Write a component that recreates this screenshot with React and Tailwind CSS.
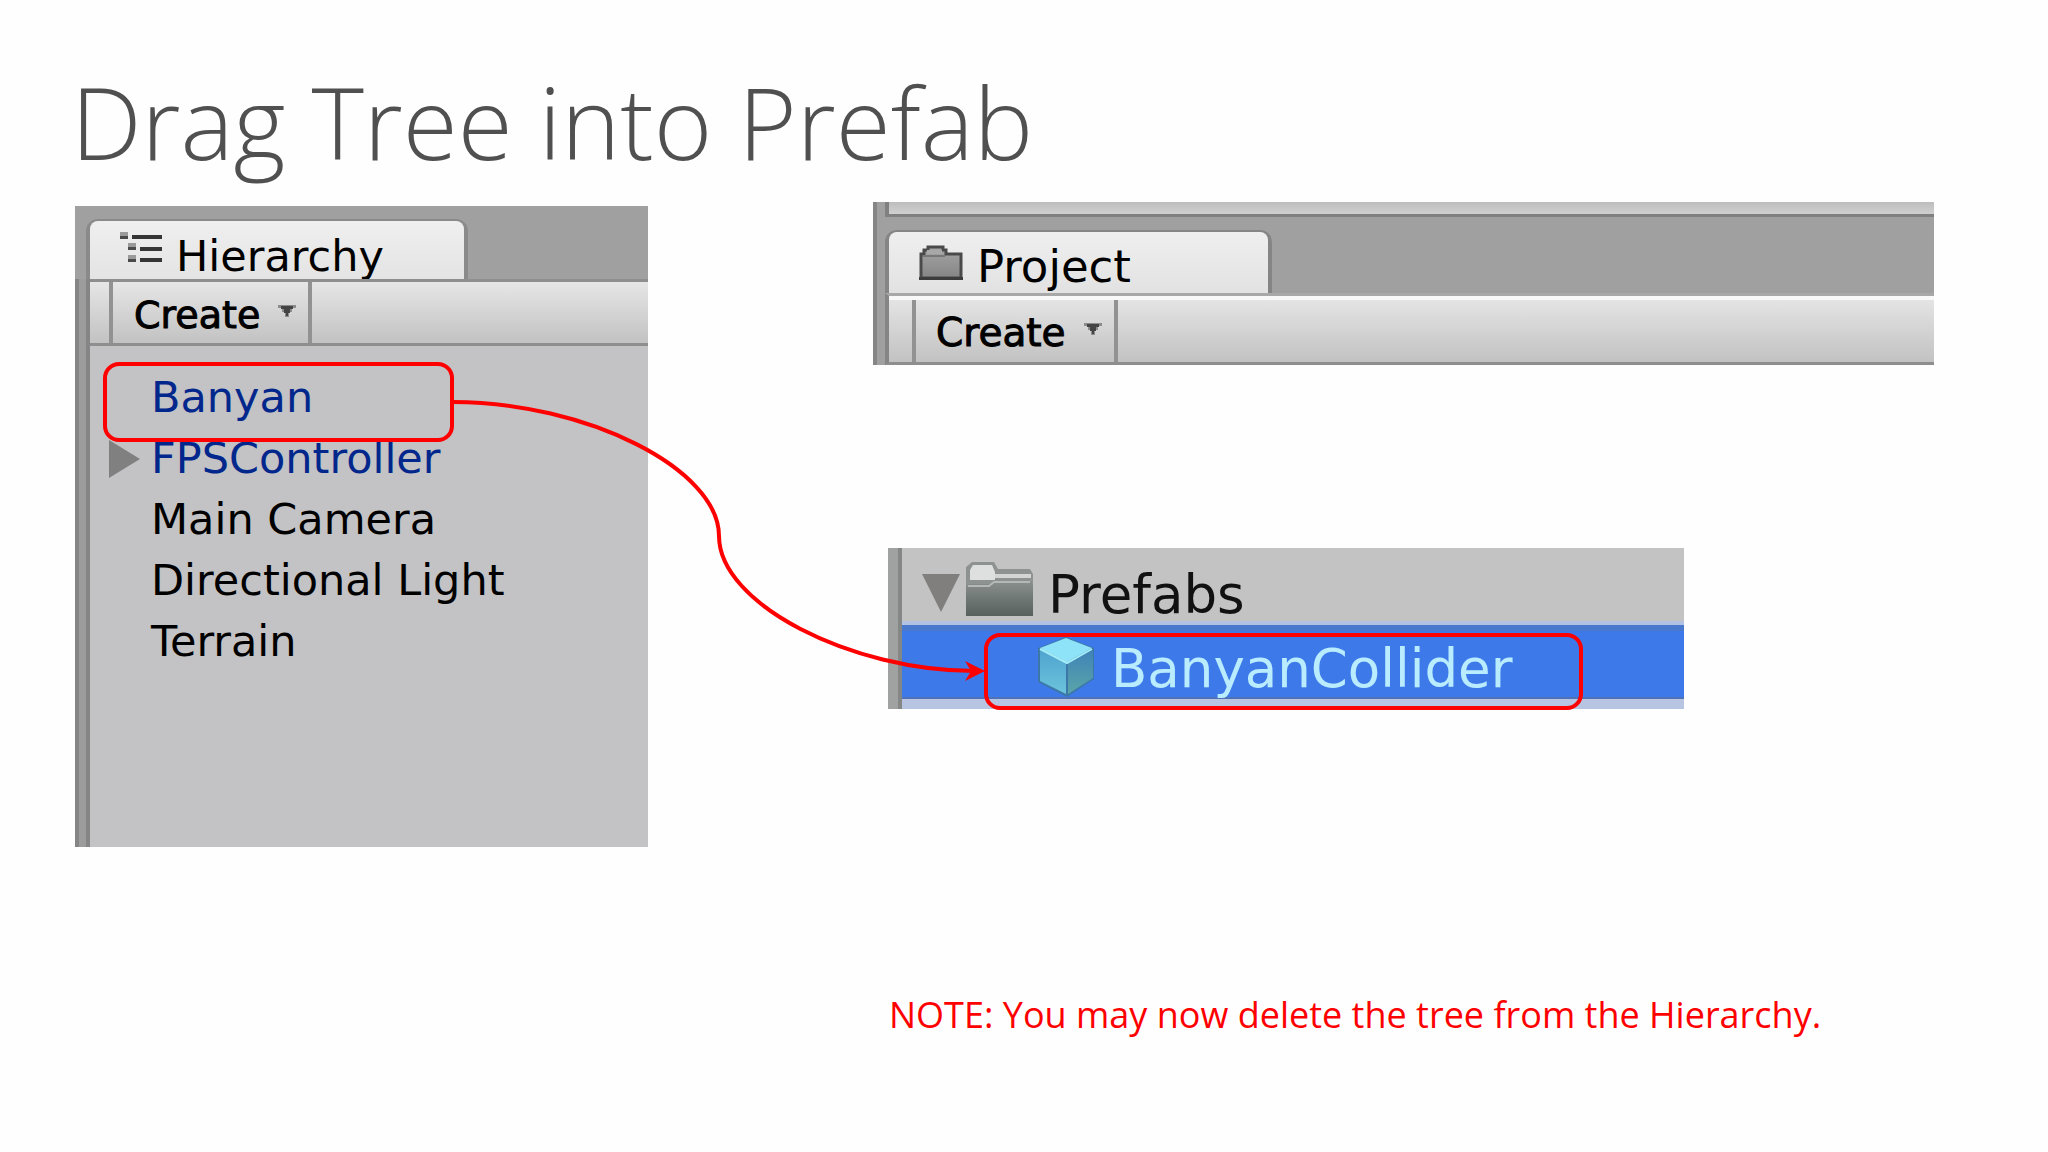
function CreateButton({ className }) {
  return (
    <button
      type="button"
      className={`flex items-center border-x-4 border-[#929292] leading-[48px] text-black [-webkit-text-stroke:1px_black] ${className}`}
    >
      Create
      <svg viewBox="0 0 18 12" className="mb-2 ml-[18px] h-3 w-[18px] shrink-0" aria-hidden="true">
        <path d="M0 0H18V3H14V7H11V12H7V7H4V3H0Z" fill="#8c8c8c" />
        <path d="M3 1H15V4H12V8H10V11H8V8H6V4H3Z" fill="#444" />
      </svg>
    </button>
  );
}

function HierarchyIcon() {
  return (
    <svg viewBox="0 0 44 36" className="h-9 w-11 shrink-0" aria-hidden="true">
      <g fill="#9a9a9a">
        <path d="M0 0H8V4H0ZM8 11H16V15H8ZM8 23H16V27H8Z" />
      </g>
      <g fill="#4a4a4a">
        <path d="M0 4H8V7H0ZM8 15H16V18H8ZM8 27H16V30H8Z" />
      </g>
      <g fill="#353535">
        <path d="M12 3H42V7H12ZM20 15H42V19H20ZM20 26H42V30H20Z" />
      </g>
    </svg>
  );
}

function ProjectIcon() {
  return (
    <svg viewBox="0 0 44 36" className="h-9 w-11 shrink-0" aria-hidden="true">
      <defs>
        <linearGradient id="projectFolder" x2="0" y2="1">
          <stop stopColor="#a5a5a5" />
          <stop offset="1" stopColor="#858585" />
        </linearGradient>
      </defs>
      <path d="M2 33V9H5V5H9V2H24V5H27V9H42V33Z" fill="url(#projectFolder)" stroke="#4a4a4a" strokeWidth="3" />
      <path d="M8 5H23V9H8Z" fill="#a8a8a8" />
      <path d="M4 11H26" stroke="#777" strokeWidth="2" />
      <path d="M0 33.500H44" stroke="#3c3c3c" strokeWidth="3" />
    </svg>
  );
}

function FolderIcon() {
  return (
    <svg viewBox="0 0 70 58" className="h-[58px] w-[70px] shrink-0" aria-hidden="true">
      <defs>
        <linearGradient id="folderFront" x2="0" y2="1">
          <stop stopColor="#8b918f" />
          <stop offset="1" stopColor="#56605d" />
        </linearGradient>
      </defs>
      <path d="M2 7L8 2H30L34 9H66L69 14V30H2Z" fill="#8e9391" />
      <path d="M9 5H28L31 12V20H6V10Z" fill="#dedfdf" />
      <path d="M31 14H67V18H31Z" fill="#d3d5d5" />
      <path d="M31 20H67V23H31Z" fill="#a9adac" />
      <path d="M4 24H25L30 20H66L69 24V56H2V27Z" fill="url(#folderFront)" />
      <path d="M4 26H25L30 22H66" fill="none" stroke="#b4b8b7" strokeWidth="2" />
    </svg>
  );
}

function CubeIcon() {
  return (
    <svg viewBox="0 0 62 62" className="h-[62px] w-[62px] shrink-0" aria-hidden="true">
      <defs>
        <linearGradient id="cubeLeft" x2="0" y2="1">
          <stop stopColor="#4fa3cf" />
          <stop offset="1" stopColor="#6cc4dc" />
        </linearGradient>
        <linearGradient id="cubeRight" x2="0" y2="1">
          <stop stopColor="#3f83b8" />
          <stop offset="1" stopColor="#5aa5a8" />
        </linearGradient>
      </defs>
      <path d="M31 1L59 12V43L32 61L3 46V12Z" fill="#3b78a8" />
      <path d="M31 2L57 12L32 26L5 12Z" fill="#8fe3f8" />
      <path d="M5 14L31 27V58L5 45Z" fill="url(#cubeLeft)" />
      <path d="M33 27L58 14V42L33 58Z" fill="url(#cubeRight)" />
      <path d="M5 13L32 27L57 13" fill="none" stroke="#a4ecf8" strokeWidth="2" />
    </svg>
  );
}

const entries = ["Main Camera", "Directional Light", "Terrain"];

function HierarchyPanel() {
  return (
    <section aria-label="Hierarchy" className="mt-1 flex h-[641px] flex-col bg-[#a0a0a0]">
      <div className="flex h-[73px] pt-[13px]">
        <div className="ml-[11px] w-[382px] rounded-t-xl border-x-4 border-t-2 border-[#8a8a8a] bg-[#a0a0a0]">
          <button
            type="button"
            className="flex h-full w-full items-center rounded-t-lg bg-gradient-to-b from-[#efefef] to-[#e4e4e4] pl-[30px] text-[43px] leading-[50px]"
          >
            <HierarchyIcon />
            <span className="ml-3 mt-3">Hierarchy</span>
          </button>
        </div>
      </div>
      <div className="flex grow border-l-4 border-[#858585]">
        <div className="w-[11px] shrink-0 border-r-4 border-[#858585] bg-[#9c9c9c]" />
        <div className="flex grow flex-col bg-[#c3c2c4]">
          <div className="flex h-[67px] border-y-[3px] border-[#8e8e8e] bg-gradient-to-b from-[#e6e6e6] to-[#c2c2c2] pl-[19px]">
            <CreateButton className="w-[203px] pl-[21px] pt-1 text-[38px]" />
          </div>
          <ul className="pt-[21px] text-[43px] leading-[61px] text-black">
            <li className="relative pl-[61px] text-[#02278c]">
              Banyan
              <span className="absolute -top-[5px] left-[13px] h-20 w-[351px] rounded-2xl border-4 border-[#fe0000]" />
            </li>
            <li className="flex items-center pl-[19px] text-[#02278c]">
              <button type="button" aria-label="Expand FPSController" className="mr-[11px]">
                <svg viewBox="0 0 31 38" className="block h-[38px] w-[31px]" aria-hidden="true">
                  <path d="M0 0L31 19L0 38Z" fill="#808080" />
                </svg>
              </button>
              FPSController
            </li>
            {entries.map((name) => (
              <li key={name} className="pl-[61px]">
                {name}
              </li>
            ))}
          </ul>
        </div>
      </div>
    </section>
  );
}

function ProjectPanel() {
  return (
    <section aria-label="Project" className="flex h-[163px] border-l-4 border-[#858585] bg-[#a0a0a0]">
      <div className="w-2 shrink-0" />
      <div className="flex grow flex-col">
        <div className="h-[15px] border-b-[3px] border-l-4 border-[#808080] bg-gradient-to-b from-[#bdbdbd] to-[#d0d0d0]" />
        <div className="flex h-[76px] pt-[13px]">
          <div className="w-[387px] rounded-t-xl border-x-4 border-t-2 border-[#858585]">
            <button
              type="button"
              className="flex h-full w-full items-center rounded-t-lg bg-gradient-to-b from-[#efefef] to-[#e2e2e2] pl-[30px] text-[45px] leading-[50px]"
            >
              <ProjectIcon />
              <span className="ml-[14px] mt-2">Project</span>
            </button>
          </div>
        </div>
        <div className="flex grow border-y-[3px] border-l-4 border-b-[#8e8e8e] border-l-[#858585] border-t-[#a8a8a8]">
          <div className="flex grow border-t-4 border-[#f8f8f8] bg-gradient-to-b from-[#e4e4e4] to-[#c2c2c2] pl-[23px]">
            <CreateButton className="w-[206px] pl-[20px] pt-1 text-[39px]" />
          </div>
        </div>
      </div>
    </section>
  );
}

function PrefabsPanel() {
  return (
    <section
      aria-label="Prefabs"
      className="ml-[15px] mt-[183px] flex h-[161px] w-[75%] bg-[#c3c3c4] text-[53px] leading-[72px]"
    >
      <div className="w-[14px] shrink-0 border-r-4 border-[#858787] bg-[#a0a2a1]" />
      <div className="flex grow flex-col">
        <div className="flex h-[77px] items-center border-b-4 border-[#b3c1e2] pl-5 text-[#111]">
          <button type="button" aria-label="Collapse Prefabs" className="mr-1 mt-4">
            <svg viewBox="0 0 38 38" className="block h-[38px] w-[38px]" aria-hidden="true">
              <path d="M0 0H38L19 38Z" fill="#817f7e" />
            </svg>
          </button>
          <span className="mt-2">
            <FolderIcon />
          </span>
          <span className="ml-[14px] mt-5">Prefabs</span>
        </div>
        <div className="relative flex h-[74px] items-center border-b-2 border-t-[6px] border-b-[#4e72b8] border-t-[#4a78cc] bg-[#3d79e8] pl-[133px] pt-1.5 text-[#b9ecff]">
          <CubeIcon />
          <span className="ml-[14px] mt-1">BanyanCollider</span>
          <span className="absolute left-[82px] top-0.5 h-[77px] w-[599px] rounded-2xl border-4 border-[#fe0000]" />
        </div>
        <div className="grow bg-[#b7c4e2]" />
      </div>
    </section>
  );
}

export default function App() {
  return (
    <main className="min-h-screen bg-[#fefefe] pl-[75px] pr-[114px] font-['DejaVu_Sans',sans-serif] text-black">
      <header className="h-[202px] pt-[60px]">
        <h1 className="-ml-1 whitespace-nowrap font-['Open_Sans',sans-serif] text-[100px] font-light leading-[122px] text-[#505050]">
          Drag Tree into Prefab
        </h1>
      </header>
      <div className="relative grid grid-cols-[573fr_225fr_1061fr] items-start">
        <HierarchyPanel />
        <div />
        <div>
          <ProjectPanel />
          <PrefabsPanel />
          <p className="mt-[276px] whitespace-nowrap pl-4 font-['Open_Sans',sans-serif] text-[36px] leading-[60px] text-[#fe0000]">
            NOTE: You may now delete the tree from the Hierarchy.
          </p>
        </div>
        <svg
          viewBox="0 0 532 290"
          className="pointer-events-none absolute left-[378px] top-[190px] h-[290px] w-[532px]"
          aria-hidden="true"
        >
          <path
            d="M0 10C133 10 266 77 266 144C266 212 398 279 522 279"
            fill="none"
            stroke="#fe0000"
            strokeWidth="4"
          />
          <path d="M532 279L512 269L518 279L512 289Z" fill="#fe0000" />
        </svg>
      </div>
    </main>
  );
}
